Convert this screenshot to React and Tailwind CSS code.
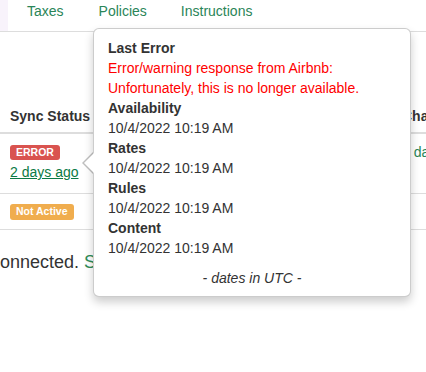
import React from 'react';

const rows = [
  { label: 'Availability', date: '10/4/2022 10:19 AM' },
  { label: 'Rates', date: '10/4/2022 10:19 AM' },
  { label: 'Rules', date: '10/4/2022 10:19 AM' },
  { label: 'Content', date: '10/4/2022 10:19 AM' },
];

const SyncPopover = () => (
  <div className="absolute left-[93px] top-[28px] w-[318px] bg-white border border-[rgba(0,0,0,0.2)] rounded-[6px] shadow-[0_5px_10px_rgba(0,0,0,0.2)] z-10">
    {/* arrow */}
    <div className="absolute -left-[12px] top-[123px] w-0 h-0 border-y-[11px] border-y-transparent border-r-[11px] border-r-[rgba(0,0,0,0.25)]" />
    <div className="absolute -left-[10px] top-[124px] w-0 h-0 border-y-[10px] border-y-transparent border-r-[10px] border-r-white" />

    <div className="pt-[9px] px-[14px] pb-[8px] text-[14px] leading-[20px] text-[#333]">
      <div className="font-bold">Last Error</div>
      <div className="text-[#ff0000]">
        Error/warning response from Airbnb: Unfortunately, this is no longer available.
      </div>
      {rows.map((r) => (
        <div key={r.label}>
          <div className="font-bold">{r.label}</div>
          <div>{r.date}</div>
        </div>
      ))}
      <div className="mt-[10px] text-center italic">- dates in UTC -</div>
    </div>
  </div>
);

export default function App() {
  return (
    <div
      className="relative w-[426px] h-[372px] overflow-hidden bg-white text-[14px] leading-[20px] text-[#333]"
      style={{ fontFamily: '"Liberation Sans", Arial, sans-serif' }}
    >
      {/* Tabs */}
      <nav className="flex h-[32px] border-b border-[#ddd]">
        <div className="w-[8px] bg-[#f8f3fb]" />
        <div className="flex pt-[1px] text-[#2a8558]">
          <span className="ml-[19px]">Taxes</span>
          <span className="ml-[35px]">Policies</span>
          <span className="ml-[34px]">Instructions</span>
        </div>
      </nav>

      {/* Table */}
      <div className="mt-[66px] w-[426px] whitespace-nowrap">
        <div className="flex h-[36px] border-b-2 border-[#ddd] font-bold">
          <div className="w-[90px] shrink-0 pl-[10px] pt-[8px]">Sync Status</div>
          <div className="w-[312px] shrink-0" />
          <div className="shrink-0 pt-[8px]">Channel</div>
        </div>

        <div className="flex h-[60px] border-b border-[#ddd]">
          <div className="w-[90px] shrink-0 pl-[10px] pt-[8px]">
            <div className="h-[20px] flex items-center">
              <span className="mt-[1px] bg-[#d9534f] text-white font-bold text-[10.5px] leading-none px-[6px] pt-[2px] pb-[3px] rounded-[3px]">
                ERROR
              </span>
            </div>
            <a className="block text-[#0b7a45] underline">2 days ago</a>
          </div>
          <div className="w-[312px] shrink-0" />
          <div className="shrink-0 pt-[8px] text-[#2a8558]">2 days ago</div>
        </div>

        <div className="flex h-[36px] border-b border-[#ddd]">
          <div className="w-[90px] shrink-0 pl-[10px] pt-[8px]">
            <div className="h-[20px] flex items-center">
              <span className="bg-[#f0ad4e] text-white font-bold text-[10.5px] leading-none px-[6px] pt-[2px] pb-[3px] rounded-[3px]">
                Not Active
              </span>
            </div>
          </div>
          <div className="w-[312px] shrink-0" />
        </div>
      </div>

      <div className="mt-[22px] -ml-[9px] text-[18px] leading-[20px] whitespace-nowrap">
        connected. <span className="text-[#2e8b57]">Set up channel</span>
      </div>

      <SyncPopover />
    </div>
  );
}
